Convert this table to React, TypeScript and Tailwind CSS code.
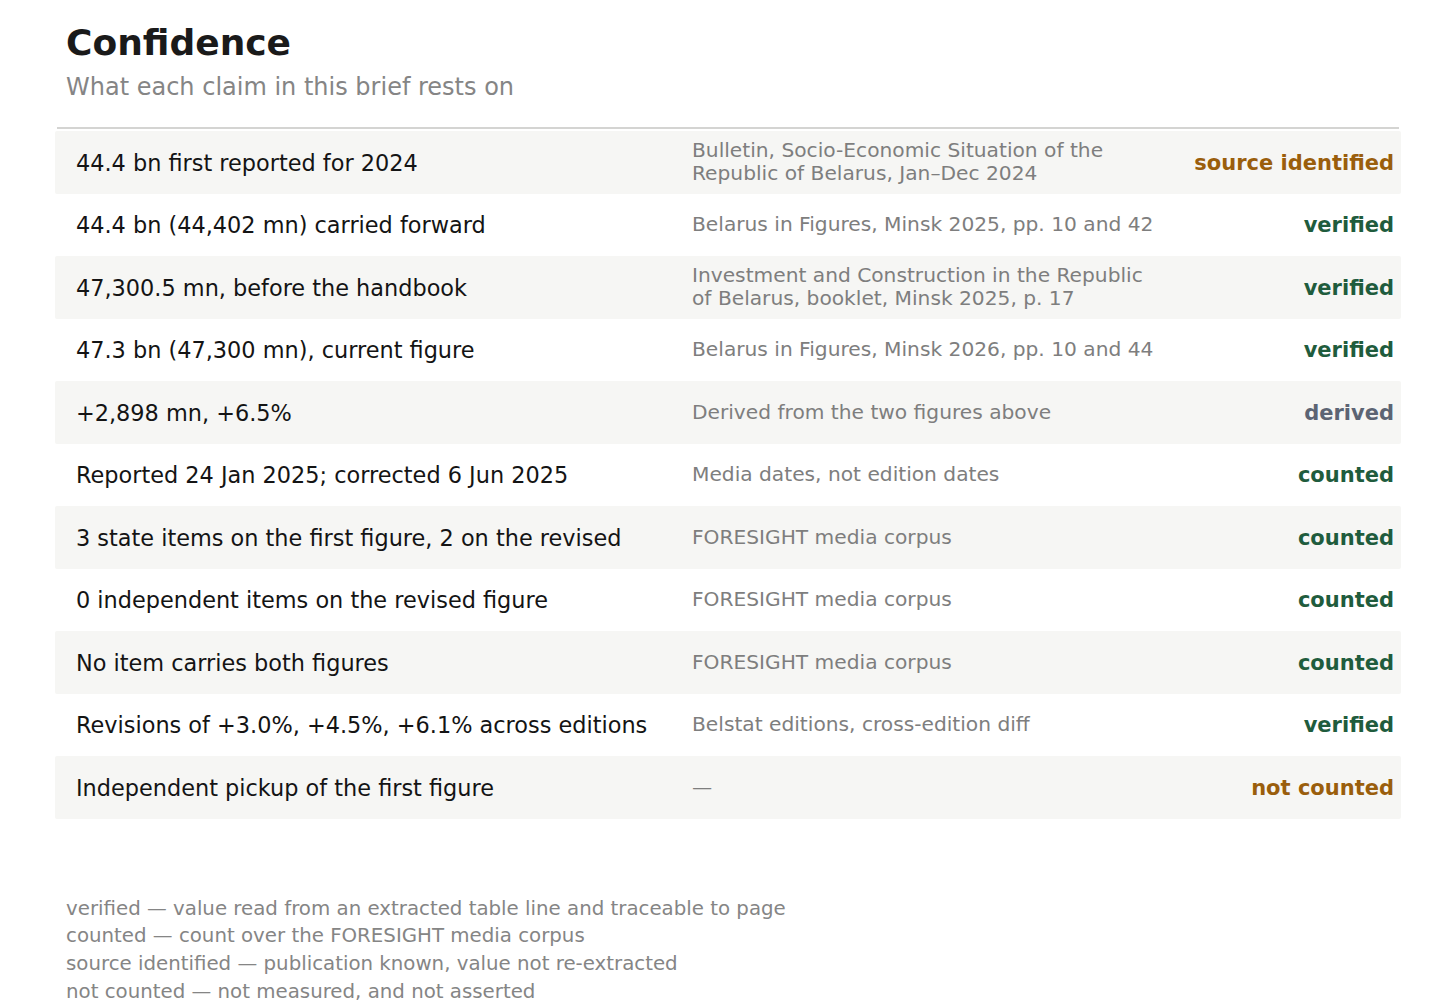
const rows: { claim: string; source: string; status: string; tone: 'amber' | 'green' | 'slate' }[] = [
  {
    claim: '44.4 bn first reported for 2024',
    source: 'Bulletin, Socio-Economic Situation of the Republic of Belarus, Jan–Dec 2024',
    status: 'source identified',
    tone: 'amber',
  },
  {
    claim: '44.4 bn (44,402 mn) carried forward',
    source: 'Belarus in Figures, Minsk 2025, pp. 10 and 42',
    status: 'verified',
    tone: 'green',
  },
  {
    claim: '47,300.5 mn, before the handbook',
    source: 'Investment and Construction in the Republic of Belarus, booklet, Minsk 2025, p. 17',
    status: 'verified',
    tone: 'green',
  },
  {
    claim: '47.3 bn (47,300 mn), current figure',
    source: 'Belarus in Figures, Minsk 2026, pp. 10 and 44',
    status: 'verified',
    tone: 'green',
  },
  { claim: '+2,898 mn, +6.5%', source: 'Derived from the two figures above', status: 'derived', tone: 'slate' },
  {
    claim: 'Reported 24 Jan 2025; corrected 6 Jun 2025',
    source: 'Media dates, not edition dates',
    status: 'counted',
    tone: 'green',
  },
  {
    claim: '3 state items on the first figure, 2 on the revised',
    source: 'FORESIGHT media corpus',
    status: 'counted',
    tone: 'green',
  },
  {
    claim: '0 independent items on the revised figure',
    source: 'FORESIGHT media corpus',
    status: 'counted',
    tone: 'green',
  },
  { claim: 'No item carries both figures', source: 'FORESIGHT media corpus', status: 'counted', tone: 'green' },
  {
    claim: 'Revisions of +3.0%, +4.5%, +6.1% across editions',
    source: 'Belstat editions, cross-edition diff',
    status: 'verified',
    tone: 'green',
  },
  { claim: 'Independent pickup of the first figure', source: '—', status: 'not counted', tone: 'amber' },
]

const toneClass = {
  amber: 'text-[#9a5e0c]',
  green: 'text-[#1f5c3d]',
  slate: 'text-[#5c6473]',
}

const legend = [
  'verified — value read from an extracted table line and traceable to page',
  'counted — count over the FORESIGHT media corpus',
  'source identified — publication known, value not re-extracted',
  'not counted — not measured, and not asserted',
]

export default function App() {
  return (
    <div className="min-h-screen bg-white px-[55px] pt-[21px] font-['DejaVu_Sans',sans-serif]">
      <div className="pl-[11px]">
        <h1 className="text-[36px] font-bold leading-[44px] text-[#1a1a1a]">Confidence</h1>
        <p className="mt-[7px] text-[24px] leading-[30px] text-[#858585]">What each claim in this brief rests on</p>
      </div>

      <div className="mx-[2px] mt-[25px] h-[2px] bg-[#d4d4d2]" />

      <div className="mt-[2px]">
        {rows.map((row, i) => (
          <div
            key={i}
            className={`flex h-[62.5px] items-center rounded-[2px] pl-[21px] pr-[7px] ${
              i % 2 === 0 ? 'bg-[#f6f6f4]' : 'bg-white'
            }`}
          >
            <div className="w-[616px] shrink-0 pt-[1px] text-[22.4px] leading-[28px] text-[#141414]">{row.claim}</div>
            <div className="w-[462px] shrink-0 text-[20.2px] leading-[23px] text-[#7e7e7e]">{row.source}</div>
            <div className={`flex-1 pt-[1px] text-right text-[21px] font-bold leading-[28px] ${toneClass[row.tone]}`}>
              {row.status}
            </div>
          </div>
        ))}
      </div>

      <div className="mt-[76px] pl-[11px] text-[19.8px] leading-[27.7px] text-[#858585]">
        {legend.map((line) => (
          <div key={line}>{line}</div>
        ))}
      </div>
    </div>
  )
}
